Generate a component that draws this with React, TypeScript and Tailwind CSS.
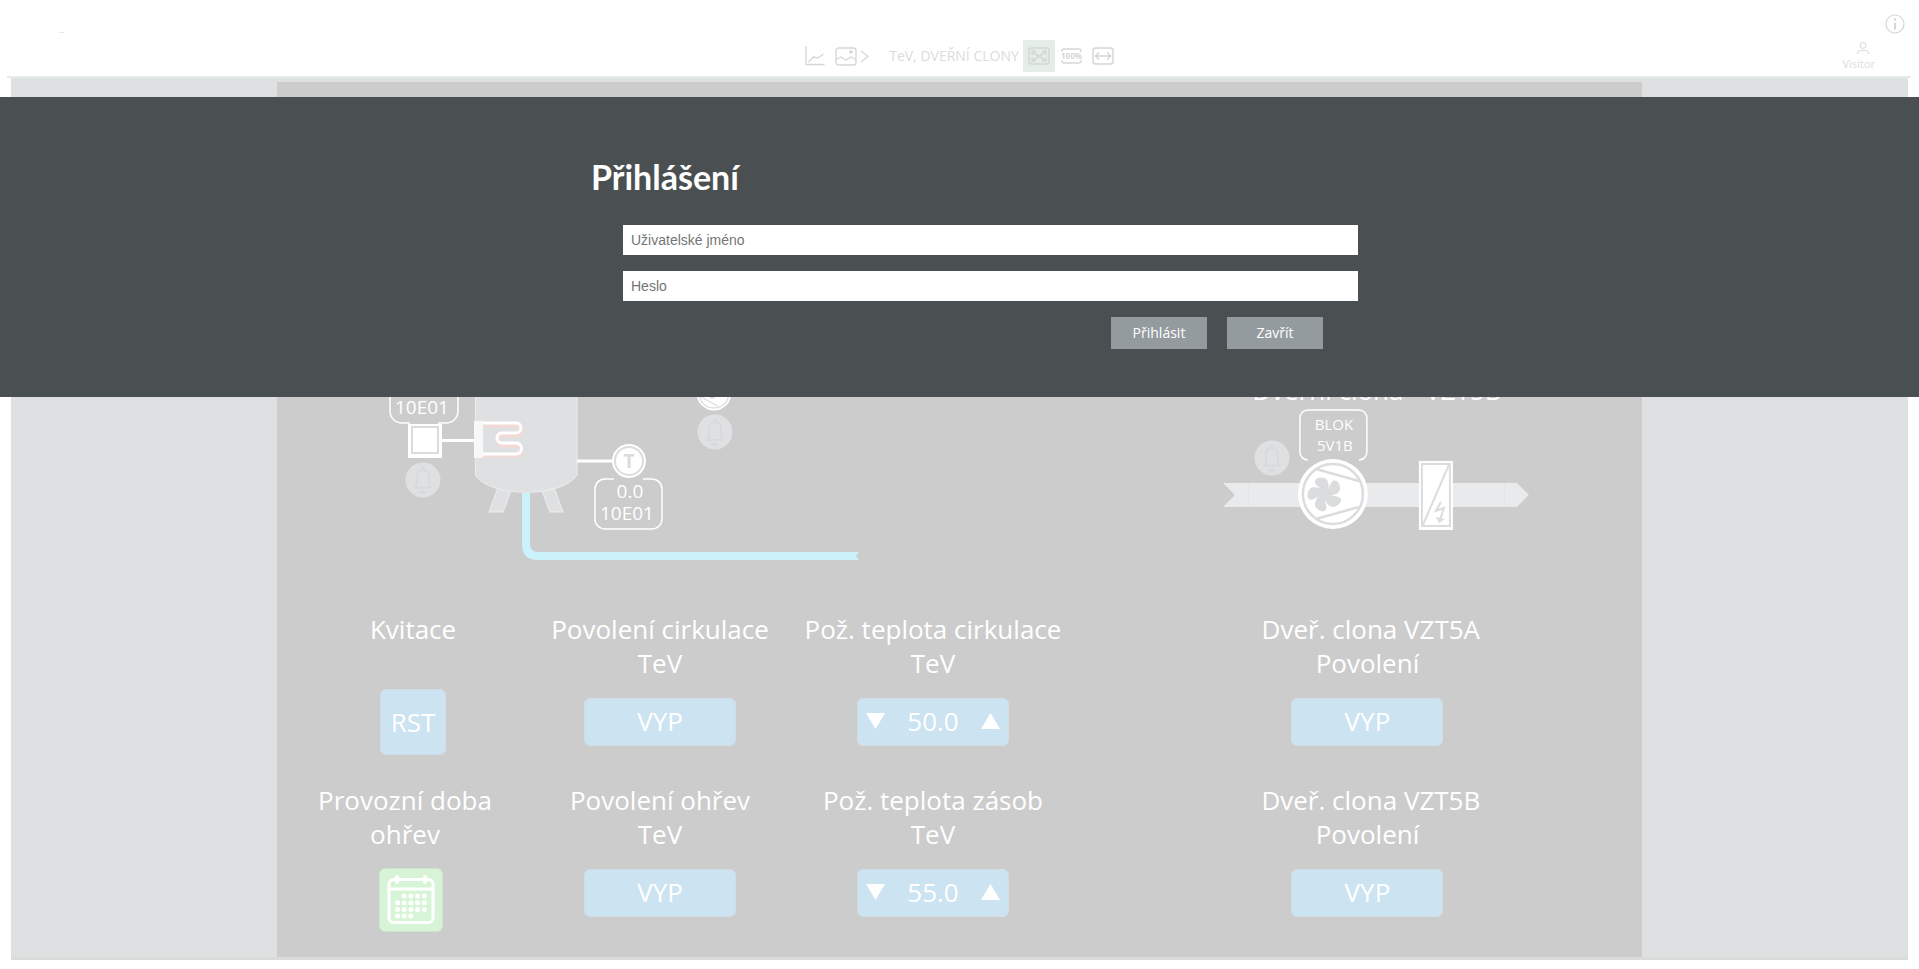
import React from 'react';

const Bell = ({ x, y }: { x: number; y: number }) => (
  <g transform={`translate(${x} ${y})`}>
    <circle r="17.5" fill="#dfe0e2" />
    <path
      d="M-8 8 C-5 5 -6 1 -6 -3 C-6 -7 -4 -10 0 -10 C4 -10 6 -7 6 -3 C6 1 5 5 8 8 Z"
      fill="none"
      stroke="#d8d9db"
      strokeWidth="1.8"
      strokeLinejoin="round"
    />
    <path d="M-1.5 -13 h3 v2 h-3z M-4 11 h8 a4 3 0 0 1 -8 0z" fill="#d8d9db" />
  </g>
);

const Fan = ({ x, y, scale, angle = 0 }: { x: number; y: number; scale: number; angle?: number }) => (
  <g transform={`translate(${x} ${y}) scale(${scale}) rotate(${angle})`}>
    <circle r="35" fill="#ffffff" />
    <g fill="none" stroke="#dbdcde" strokeWidth="2.5">
      <circle r="30" />
      <path d="M-17 -25 L26 -13 M-17 25 L26 13" />
    </g>
    <g transform="translate(-8 0)" fill="#dbdcde">
      <circle r="4" />
      {[0, 72, 144, 216, 288].map((blade) => (
        <path
          key={blade}
          transform={`rotate(${blade})`}
          d="M-1 -1 C-3 -6 -10 -8 -10 -13 C-9 -17 -4 -17 0 -16 C4 -14 5 -6 2 0 Z"
        />
      ))}
    </g>
  </g>
);

const Diagram = () => (
  <svg
    viewBox="277 82 1365 512"
    className="block w-full font-['Open_Sans',sans-serif]"
    role="img"
    aria-label="TeV, dveřní clony"
  >
    {/* storage tank */}
    <g fill="#dfe0e2" stroke="#e9eaeb" strokeWidth="1.2">
      <path d="M498 488 L489 512 H503 L512 488 Z" />
      <path d="M541 488 L550 512 H563 L554 488 Z" />
      <path d="M475.500 280 V475 C490 498 562 498 577 475 V280 Z" />
    </g>
    <path d="M526 493 V544 Q526 556 538 556 H856" fill="none" stroke="#cbf1fa" strokeWidth="8" />
    <path d="M855 552 H859 L856 556 L859 560 H855 Z" fill="#cbf1fa" />

    {/* heating coil */}
    <g fill="none" strokeWidth="3">
      <path
        d="M483 426 H517 a5 5 0 0 1 0 10 H503 a5 5 0 0 0 0 10 H517 a5 5 0 0 1 0 10 H483"
        stroke="#f5d9d4"
      />
      <path
        d="M483 423 H516 a5 5 0 0 1 0 10 H502 a5 5 0 0 0 0 10 H516 a5 5 0 0 1 0 11 H483"
        stroke="#ffffff"
      />
    </g>
    <rect x="474" y="421" width="9" height="37" fill="#f8f8f8" />
    <path d="M442 440.500 H474" stroke="#ffffff" strokeWidth="3" />
    <rect x="408" y="424" width="34" height="34" fill="#ffffff" />
    <rect x="412" y="427" width="26" height="26" fill="none" stroke="#dcdcdc" strokeWidth="2" />
    <path
      d="M410 423 H402 a12 12 0 0 1 -12 -12 V384 M438 423 H446 a12 12 0 0 0 12 -12 V384"
      fill="none"
      stroke="#ffffff"
      strokeWidth="1.5"
    />
    <Bell x={423} y={480} />

    {/* temperature probe */}
    <path d="M577 461 H614" stroke="#ffffff" strokeWidth="3" />
    <circle cx="629" cy="461" r="17" fill="#ffffff" />
    <circle cx="629" cy="461" r="14" fill="none" stroke="#dcdcdc" strokeWidth="2" />
    <path
      d="M614 479 H605 a10 10 0 0 0 -10 10 V519 a10 10 0 0 0 10 10 H652 a10 10 0 0 0 10 -10 V489 a10 10 0 0 0 -10 -10 H643"
      fill="none"
      stroke="#ffffff"
      strokeWidth="1.5"
    />
    <g textAnchor="middle" fill="#ffffff" fontSize="19">
      <text x="422" y="414">10E01</text>
      <text x="630" y="498">0.0</text>
      <text x="627" y="520">10E01</text>
    </g>
    <text x="629" y="468" textAnchor="middle" fill="#dcdcdc" fontSize="19" fontWeight="700">T</text>

    {/* circulation pump */}
    <Fan x={714} y={393} scale={0.5} angle={45} />
    <Bell x={715} y={432} />

    {/* door curtain VZT5B */}
    <text x="1377" y="400" textAnchor="middle" fill="#ffffff" fontSize="26">Dveřní clona - VZT5B</text>
    <path d="M1223 483 H1517 L1529 495 L1517 507 H1223 L1235 495 Z" fill="#e9eaec" />
    <path d="M1248.500 483 V507 M1504.500 483 V507" stroke="#e4e5e7" />
    <path
      d="M1308 460 a8 8 0 0 1 -8 -8 V418 a8 8 0 0 1 8 -8 H1359 a8 8 0 0 1 8 8 V452 a8 8 0 0 1 -8 8"
      fill="none"
      stroke="#ffffff"
      strokeWidth="1.5"
    />
    <g textAnchor="middle" fill="#ffffff" fontSize="15">
      <text x="1334" y="430">BLOK</text>
      <text x="1335" y="451">5V1B</text>
    </g>
    <Bell x={1272} y={458} />
    <Fan x={1333} y={494} scale={1} />
    <rect x="1419" y="461" width="34" height="69" fill="#ffffff" />
    <g fill="none" stroke="#dbdcde" strokeWidth="2">
      <rect x="1422" y="464" width="28" height="62" />
      <path d="M1423 525 L1449 465" />
      <path d="M1441 502 L1436 511 L1444 508 L1440 520" />
    </g>
    <path d="M1436 517 L1439 523 L1445 519 Z" fill="#dbdcde" />
  </svg>
);

const caption = 'flex h-[68px] flex-col items-center text-[26px] leading-[34px] whitespace-pre';
const blue = 'rounded-md border border-[#d2dde6] bg-[#cce3f1]';

const Switch = ({ lines }: { lines: string[] }) => (
  <div className="flex flex-col items-center">
    <div className={caption}>
      {lines.map((line) => <span key={line}>{line}</span>)}
    </div>
    <button className={`mt-[18px] h-12 w-[152px] pb-px text-[26px] ${blue}`}>VYP</button>
  </div>
);

const Stepper = ({ lines, value }: { lines: string[]; value: string }) => (
  <div className="flex flex-col items-center">
    <div className={caption}>
      {lines.map((line) => <span key={line}>{line}</span>)}
    </div>
    <div className={`mt-[18px] flex h-12 w-[152px] items-center justify-between px-2 pb-px text-[26px] ${blue}`}>
      <button aria-label="Snížit">
        <svg width="19" height="16" className="block"><path d="M0 0 H19 L9.500 16 Z" fill="#ffffff" /></svg>
      </button>
      <output>{value}</output>
      <button aria-label="Zvýšit">
        <svg width="19" height="16" className="block"><path d="M0 16 H19 L9.500 0 Z" fill="#ffffff" /></svg>
      </button>
    </div>
  </div>
);

const calendarDots = [
  [1, 2, 3, 4],
  [0, 1, 2, 3, 4],
  [0, 1, 2, 3, 4],
  [0, 1, 2],
];

const CalendarIcon = () => (
  <svg width="48" height="50" viewBox="0 0 48 50" fill="none" stroke="#ffffff">
    <rect x="2" y="4.500" width="44" height="43" rx="4.500" strokeWidth="3" />
    <path d="M2 14 H46" strokeWidth="3" />
    <path d="M10 2 V7 M38 2 V7" strokeWidth="4" strokeLinecap="round" />
    {calendarDots.map((row, r) =>
      row.map((c) => (
        <circle key={`${r}-${c}`} cx={10.5 + c * 6.7} cy={21 + r * 6.7} r="2.500" fill="#ffffff" stroke="none" />
      ))
    )}
  </svg>
);

const Controls = () => (
  <div className="grid grid-cols-[220fr_274fr_272fr_573fr] gap-y-7 pt-[18px] pb-[25px] pl-[26px]">
    <div className="flex flex-col items-center">
      <div className={caption}>Kvitace</div>
      <button className={`mt-[9px] size-[66px] pt-px text-[26px] ${blue}`}>RST</button>
    </div>
    <Switch lines={['Povolení cirkulace', 'TeV']} />
    <Stepper lines={['Pož. teplota cirkulace', 'TeV']} value="50.0" />
    <div className="pl-6">
      <Switch lines={[' Dveř. clona VZT5A', 'Povolení']} />
    </div>

    <div className="flex flex-col items-center pr-1">
      <div className={`pr-3 ${caption}`}>
        <span>Provozní doba</span>
        <span>ohřev</span>
      </div>
      <button
        aria-label="Kalendář"
        className="mt-[17px] flex size-16 items-center justify-center rounded-md border border-[#d2e2d2] bg-[#d7f4d7]"
      >
        <CalendarIcon />
      </button>
    </div>
    <Switch lines={['Povolení ohřev', 'TeV']} />
    <Stepper lines={['Pož. teplota zásob', 'TeV']} value="55.0" />
    <div className="pl-6">
      <Switch lines={[' Dveř. clona VZT5B', 'Povolení']} />
    </div>
  </div>
);

const Header = () => (
  <header className="grid h-[76px] grid-cols-[1fr_auto_1fr] font-['Open_Sans',sans-serif] text-[#d6d6d6]">
    <div className="pt-8 pl-[59px]">
      <div className="h-px w-[5px] bg-[#e4eee7]" />
    </div>

    <nav className="mb-1 flex h-8 items-center self-end">
      <button aria-label="Trendy">
        <svg width="20" height="20" fill="none" stroke="currentColor" strokeWidth="1.300">
          <path d="M1 0 V18.500 H19.500" />
          <path d="M3.500 16 L8.500 11 L13 12 L18.500 8" />
        </svg>
      </button>
      <button aria-label="Obrazy" className="ml-[10px] flex items-center gap-[3px]">
        <svg width="22" height="19" fill="none" stroke="currentColor" strokeWidth="1.300">
          <rect x="1" y="1" width="20" height="17" rx="2.500" />
          <path d="M1 12.500 L6 10 L11 13 L16 10 L21 12.500" />
          <circle cx="16" cy="5" r="1.800" fill="currentColor" stroke="none" />
        </svg>
        <svg width="9" height="13" fill="none" stroke="currentColor" strokeWidth="1.300">
          <path d="M1 1 L8 6.500 L1 12" />
        </svg>
      </button>
      <h2 className="mr-1 ml-5 pb-0.5 text-[14px] whitespace-nowrap text-[#dcdcdc]">TeV, DVEŘNÍ CLONY</h2>
      <button aria-label="Přizpůsobit" className="flex size-8 items-center justify-center bg-[#e4ede6]">
        <svg width="22" height="18" fill="none" stroke="currentColor" strokeWidth="1.500">
          <rect x="1" y="1" width="20" height="16" rx="2.500" />
          <path d="M4.500 5 L17.500 13.500 M17.500 5 L4.500 13.500" />
          <path d="M4 8 V4 H8 M14 4 H18 V8 M18 10.500 V14 H14 M8 14 H4 V10.500" />
        </svg>
      </button>
      <button aria-label="100 %" className="ml-[6px]">
        <svg width="21" height="16" fill="none" stroke="currentColor" strokeWidth="1.300">
          <path d="M1 4 V3 a2 2 0 0 1 2 -2 H18 a2 2 0 0 1 2 2 V4 M1 12 V13 a2 2 0 0 0 2 2 H18 a2 2 0 0 0 2 -2 V12" />
          <text x="10.500" y="11" textAnchor="middle" fontSize="8" fontWeight="700" fill="currentColor" stroke="none">
            100%
          </text>
        </svg>
      </button>
      <button aria-label="Na šířku" className="ml-[10px]">
        <svg width="22" height="18" fill="none" stroke="currentColor" strokeWidth="1.500">
          <rect x="1" y="1" width="20" height="16" rx="2.500" />
          <path d="M4 9 H18 M7 5.500 L3.500 9 L7 12.500 M15 5.500 L18.500 9 L15 12.500" />
        </svg>
      </button>
    </nav>

    <div className="flex flex-col items-end pt-[14px]">
      <button aria-label="Informace" className="mr-[14px]">
        <svg width="20" height="20" className="block" fill="none" stroke="currentColor">
          <circle cx="10" cy="10" r="9" strokeWidth="1.200" />
          <path d="M10 9 V15.500" strokeWidth="2" />
          <circle cx="10" cy="5.500" r="1.300" fill="currentColor" stroke="none" />
        </svg>
      </button>
      <button className="mt-2 mr-11 flex flex-col items-end text-[11px] leading-[18px]">
        <svg width="12" height="13" className="mr-[6px] block" fill="none" stroke="currentColor" strokeWidth="1">
          <circle cx="6" cy="3.500" r="2.900" />
          <path d="M0.600 12 V11 a3 3 0 0 1 3 -2.600 H8.400 a3 3 0 0 1 3 2.600 V12" />
        </svg>
        <span className="text-[#dcdcdc]">Visitor</span>
      </button>
    </div>
  </header>
);

const LoginDialog = () => (
  <div role="dialog" aria-labelledby="login-title" className="absolute inset-x-0 top-[97px] bg-[#4a4f52] pt-[60px] pb-12">
    <div className="mx-auto w-full max-w-[737px]">
      <h1 id="login-title" className="font-[Lato,sans-serif] text-[34px] leading-10 font-bold text-white">
        Přihlášení
      </h1>
      <form className="-mr-[30px] ml-8 pt-7" onSubmit={(e) => e.preventDefault()}>
        <input
          type="text"
          aria-label="Uživatelské jméno"
          placeholder="Uživatelské jméno"
          className="mb-4 block h-[30px] w-full bg-white px-2 font-['Liberation_Sans',sans-serif] text-[14px] text-black outline-none placeholder:text-[#757575]"
        />
        <input
          type="password"
          aria-label="Heslo"
          placeholder="Heslo"
          className="mb-4 block h-[30px] w-full bg-white px-2 font-['Liberation_Sans',sans-serif] text-[14px] text-black outline-none placeholder:text-[#757575]"
        />
        <div className="flex justify-end gap-5 pr-[35px] font-['Open_Sans',sans-serif] text-[14px] text-white">
          <button type="submit" className="h-8 w-24 bg-[#939b9e] pb-px">Přihlásit</button>
          <button type="button" className="h-8 w-24 bg-[#939b9e] pb-px">Zavřít</button>
        </div>
      </form>
    </div>
  </div>
);

const App = () => {
  return (
    <div className="relative min-h-screen bg-white">
      <Header />
      <div className="mr-2 ml-[7px] h-[2px] bg-[#e4ede6]" />
      <main className="mx-[11px] border-b-[3px] border-[#dadbdb] bg-[#dfe0e2] pt-1">
        <section className="mx-auto w-[71.95%] bg-[#cccccc] font-['Open_Sans',sans-serif] text-white">
          <Diagram />
          <Controls />
        </section>
      </main>
      <LoginDialog />
    </div>
  );
};

export default App;
